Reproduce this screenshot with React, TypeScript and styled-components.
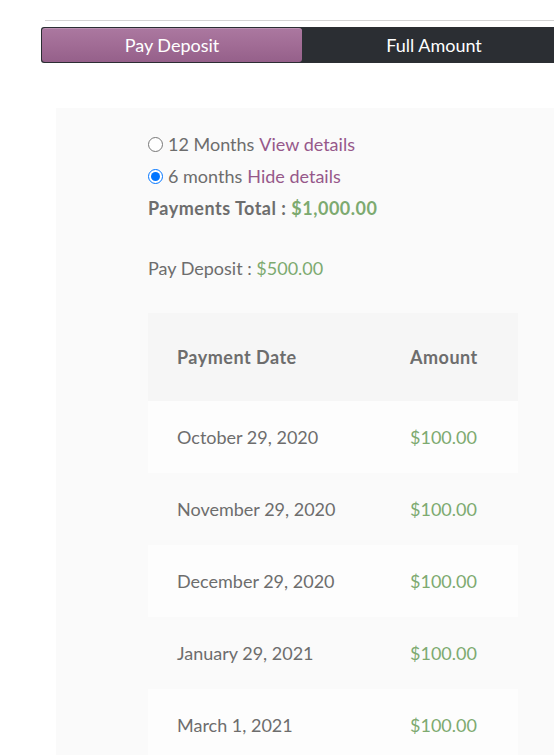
import styled, { createGlobalStyle } from "styled-components";

const GlobalStyle = createGlobalStyle`
  html, body {
    margin: 0;
    padding: 0;
    background: #ffffff;
    overflow-x: hidden;
  }
  body {
    font-family: "Lato", "Open Sans", sans-serif;
    color: #6d6d6d;
  }
`;

const Page = styled.div`
  width: 554px;
  min-height: 755px;
  padding-top: 20px;
  box-sizing: border-box;
`;

const Rule = styled.hr`
  margin: 0 0 0 45px;
  border: 0;
  border-top: 1px solid #d4d4d4;
  height: 0;
`;

const TabBar = styled.div`
  display: flex;
  width: 526px;
  height: 36px;
  margin: 6px 0 0 41px;
  background: #2b2e33;
  border-radius: 3px 0 0 3px;
  box-sizing: border-box;
  padding: 1px 0 1px 1px;
`;

const Tab = styled.button<{ $active?: boolean }>`
  flex: 0 0 ${(p) => (p.$active ? "260px" : "264px")};
  border: 0;
  border-radius: 3px;
  font-family: inherit;
  font-size: 18px;
  color: #ffffff;
  cursor: pointer;
  padding: 0;
  background: ${(p) =>
    p.$active
      ? "linear-gradient(to bottom, #ab78a0 0%, #a16c95 50%, #95608a 100%)"
      : "transparent"};
  box-shadow: ${(p) =>
    p.$active ? "inset 0 1px 0 rgba(255,255,255,0.18)" : "none"};
`;

const Panel = styled.div`
  margin: 45px 0 0 56px;
  padding: 20px 0 0 92px;
  background: #fafafa;
  min-height: 647px;
  box-sizing: border-box;
`;

const OptionRow = styled.label`
  display: flex;
  align-items: center;
  height: 32px;
  font-size: 18px;
`;

const Radio = styled.input`
  width: 15px;
  height: 15px;
  margin: 0 5px 0 0;
`;

const Link = styled.span`
  color: #96588a;
  margin-left: 5px;
`;

const Line = styled.div<{ $gap?: number }>`
  height: 32px;
  line-height: 32px;
  font-size: 18px;
  margin-top: ${(p) => p.$gap || 0}px;
`;

const Strong = styled.strong`
  font-weight: 700;
  letter-spacing: 0.5px;
`;

const Price = styled.span<{ $bold?: boolean }>`
  color: #7daa70;
  font-weight: ${(p) => (p.$bold ? 700 : 400)};
  letter-spacing: ${(p) => (p.$bold ? "0.5px" : "0")};
`;

const Table = styled.table`
  width: 370px;
  margin-top: 29px;
  border-collapse: collapse;
  font-size: 18px;
`;

const HeadCell = styled.th<{ $w?: number }>`
  height: 88px;
  padding: 0 0 0 ${(p) => (p.$w ? 29 : 0)}px;
  width: ${(p) => (p.$w ? `${p.$w}px` : "auto")};
  text-align: left;
  font-weight: 700;
  letter-spacing: 0.5px;
  background: #f6f6f6;
  box-sizing: border-box;
`;

const Row = styled.tr<{ $odd?: boolean }>`
  background: ${(p) => (p.$odd ? "#fdfdfd" : "transparent")};
`;

const Cell = styled.td<{ $first?: boolean }>`
  height: 72px;
  padding: 0 0 0 ${(p) => (p.$first ? 29 : 0)}px;
`;

const payments = [
  "October 29, 2020",
  "November 29, 2020",
  "December 29, 2020",
  "January 29, 2021",
  "March 1, 2021",
];

export default function App() {
  return (
    <Page>
      <GlobalStyle />
      <Rule />
      <TabBar>
        <Tab $active>Pay Deposit</Tab>
        <Tab>Full Amount</Tab>
      </TabBar>
      <Panel>
        <OptionRow>
          <Radio type="radio" name="plan" />
          12 Months<Link>View details</Link>
        </OptionRow>
        <OptionRow>
          <Radio type="radio" name="plan" defaultChecked />
          6 months<Link>Hide details</Link>
        </OptionRow>
        <Line>
          <Strong>Payments Total : </Strong>
          <Price $bold>$1,000.00</Price>
        </Line>
        <Line $gap={28}>
          Pay Deposit : <Price>$500.00</Price>
        </Line>
        <Table>
          <thead>
            <tr>
              <HeadCell $w={262}>Payment Date</HeadCell>
              <HeadCell>Amount</HeadCell>
            </tr>
          </thead>
          <tbody>
            {payments.map((date, i) => (
              <Row key={date} $odd={i % 2 === 0}>
                <Cell $first>{date}</Cell>
                <Cell>
                  <Price>$100.00</Price>
                </Cell>
              </Row>
            ))}
          </tbody>
        </Table>
      </Panel>
    </Page>
  );
}
